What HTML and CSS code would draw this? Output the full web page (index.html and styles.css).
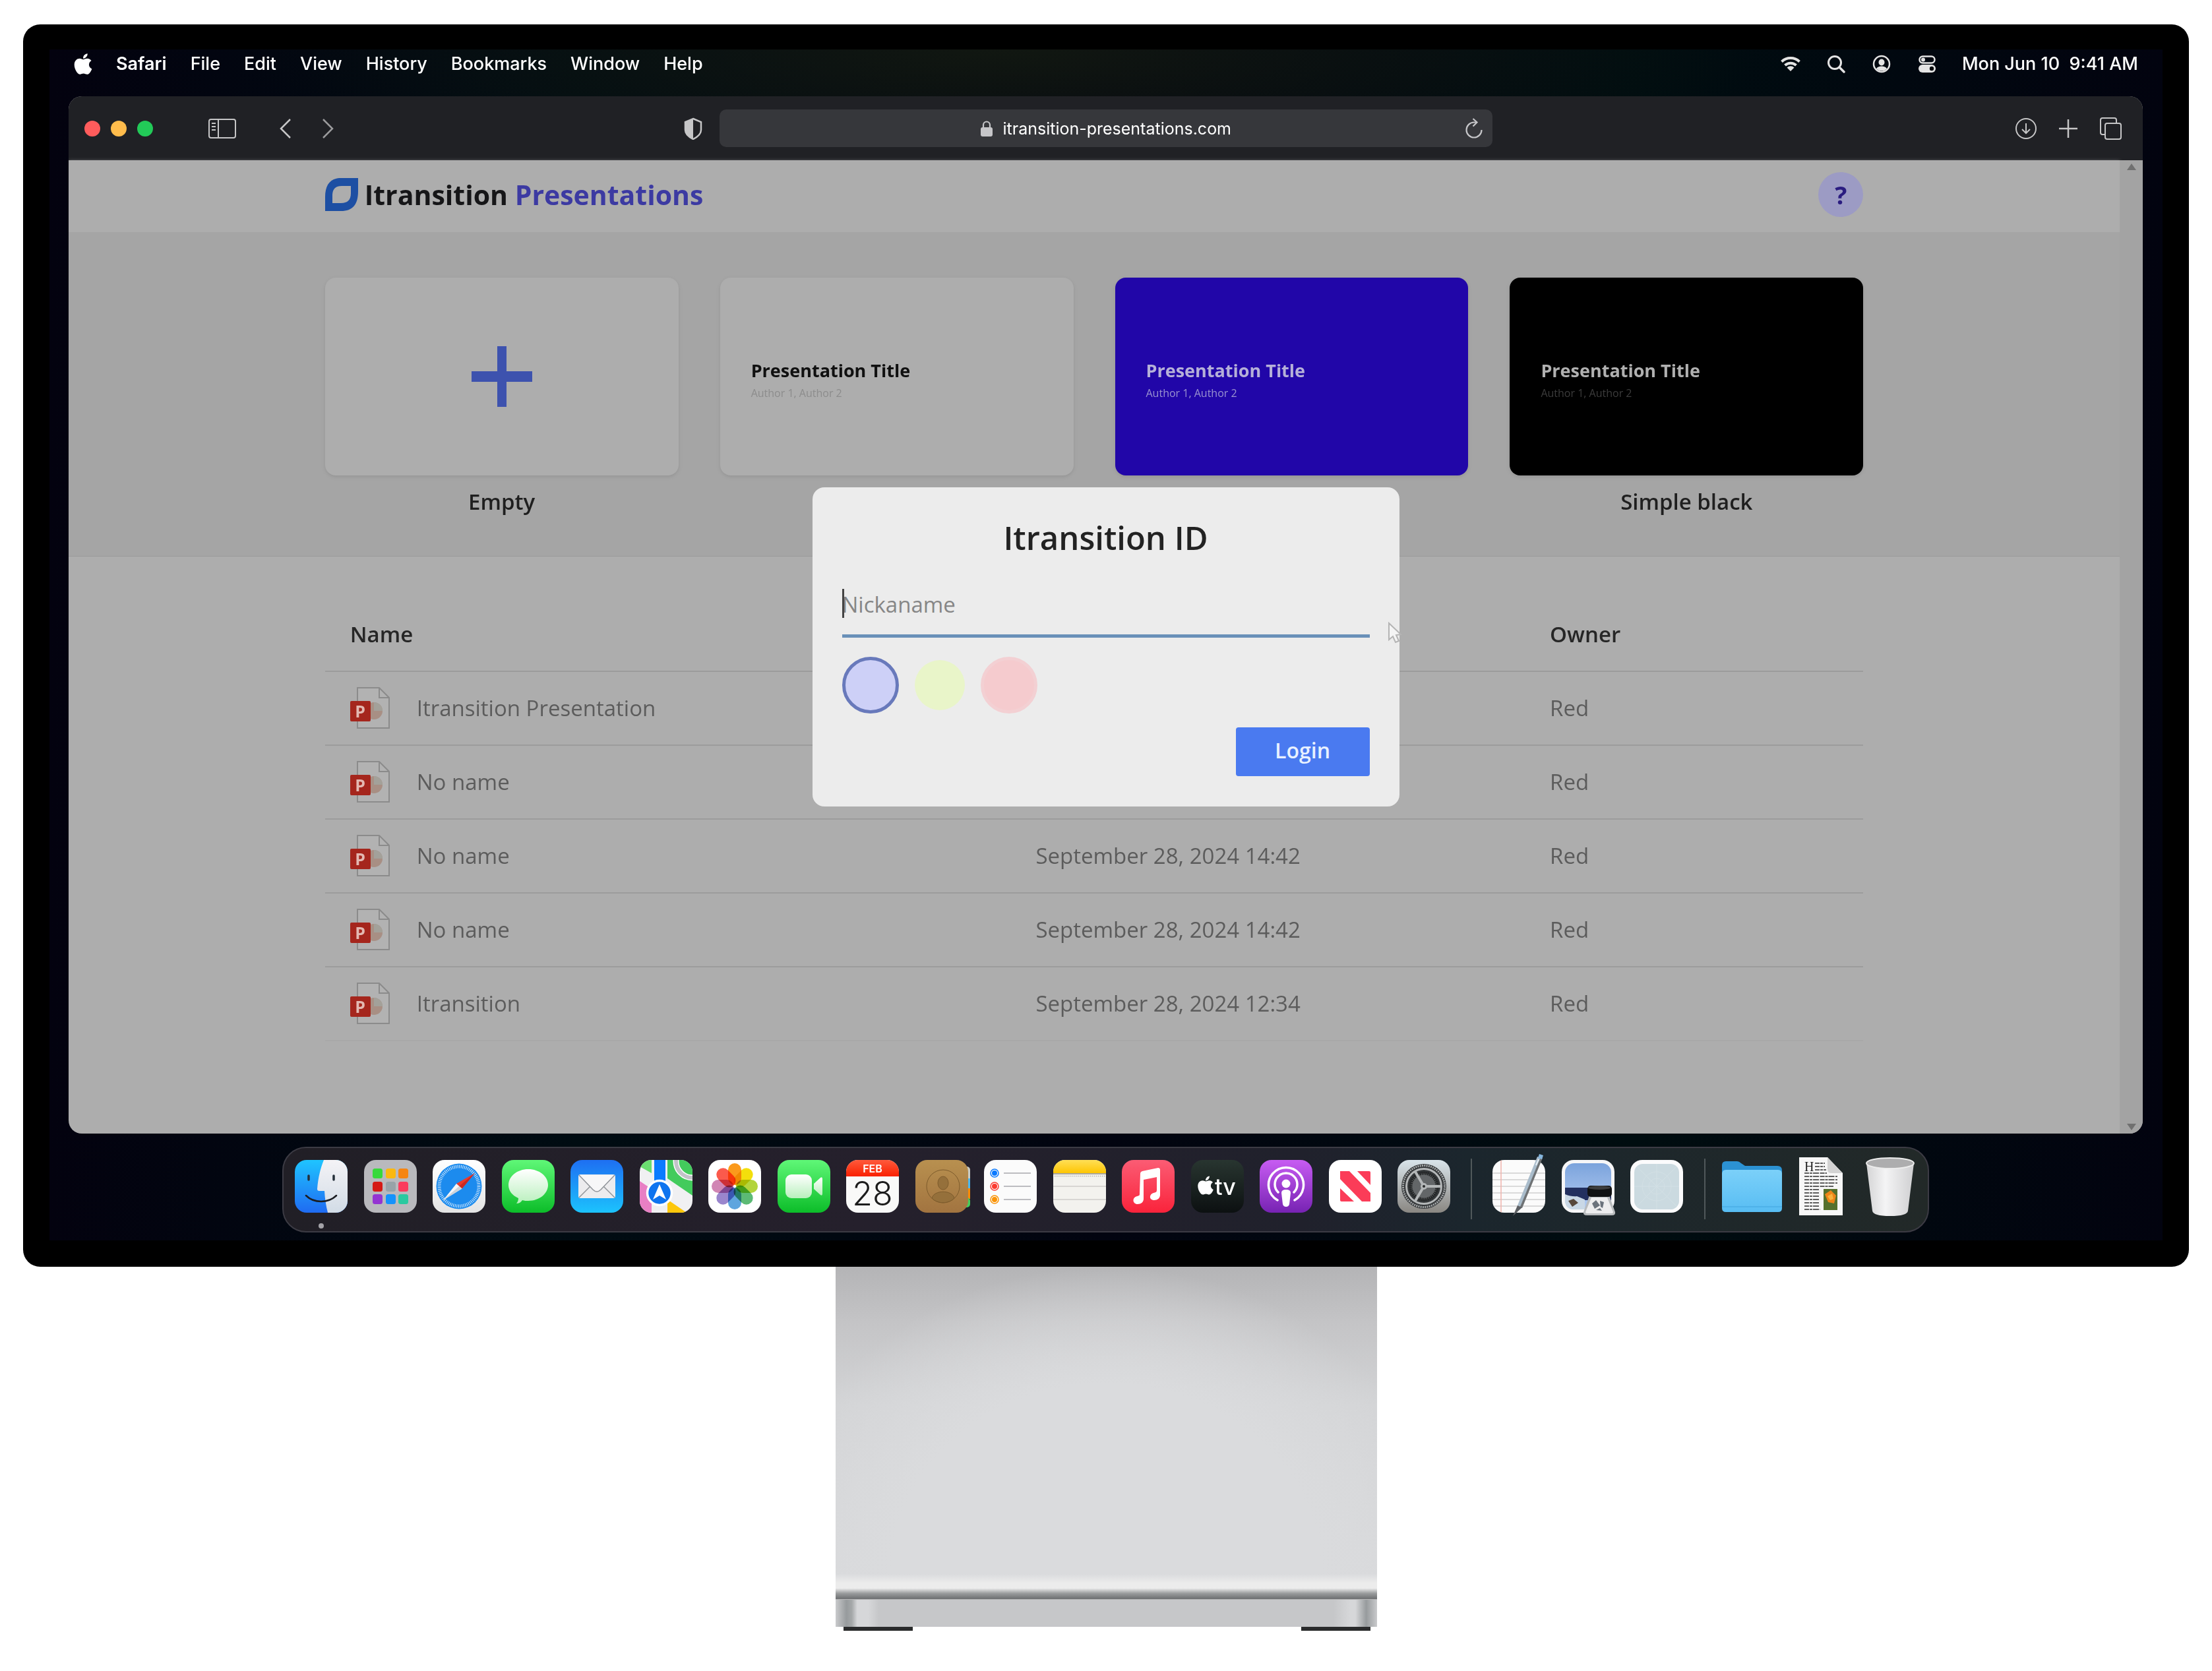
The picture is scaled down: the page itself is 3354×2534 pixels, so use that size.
FILE: index.html
```html
<!DOCTYPE html>
<html lang="en">
<head>
<meta charset="utf-8">
<title>Itransition Presentations</title>
<link rel="stylesheet" href="styles.css">
</head>
<body>
<svg class="defs" aria-hidden="true">
  <defs>
    <linearGradient id="gGreen" x2="0" y2="1"><stop offset="0" stop-color="#5ff777"/><stop offset="1" stop-color="#0cbd29"/></linearGradient>
    <linearGradient id="gWhite" x2="0" y2="1"><stop offset="0" stop-color="#fff"/><stop offset="1" stop-color="#e4e4e4"/></linearGradient>
    <linearGradient id="gBubble" x2="0" y2="1"><stop offset="0" stop-color="#fff"/><stop offset="1" stop-color="#b9f0bd"/></linearGradient>
    <linearGradient id="gBlue" x2="0" y2="1"><stop offset="0" stop-color="#1fc4ff"/><stop offset="1" stop-color="#1f6bf2"/></linearGradient>
    <linearGradient id="gMail" x2="0" y2="1"><stop offset="0" stop-color="#1e6ff2"/><stop offset="1" stop-color="#1cc3fd"/></linearGradient>
    <linearGradient id="gFace" x2="0" y2="1"><stop offset="0" stop-color="#f4f3f6"/><stop offset="1" stop-color="#d2dce6"/></linearGradient>
    <linearGradient id="gRed" x2="0" y2="1"><stop offset="0" stop-color="#ff5a3c"/><stop offset="1" stop-color="#f92000"/></linearGradient>
    <linearGradient id="gTan" x2="0" y2="1"><stop offset="0" stop-color="#b8904f"/><stop offset="1" stop-color="#a27440"/></linearGradient>
    <linearGradient id="gYellow" x2="0" y2="1"><stop offset="0" stop-color="#ffdf57"/><stop offset="1" stop-color="#fec502"/></linearGradient>
    <linearGradient id="gMusic" x2="0" y2="1"><stop offset="0" stop-color="#fb5c74"/><stop offset="1" stop-color="#fa233b"/></linearGradient>
    <linearGradient id="gTv" x2="0" y2="1"><stop offset="0" stop-color="#283530"/><stop offset="1" stop-color="#0c1011"/></linearGradient>
    <linearGradient id="gPod" x2="0" y2="1"><stop offset="0" stop-color="#c75cf2"/><stop offset="1" stop-color="#7723b3"/></linearGradient>
    <linearGradient id="gGear" x2="0" y2="1"><stop offset="0" stop-color="#d9e4ea"/><stop offset="1" stop-color="#8a8782"/></linearGradient>
    <linearGradient id="gFolder" x2="0" y2="1"><stop offset="0" stop-color="#7bd0f9"/><stop offset="1" stop-color="#58bdf3"/></linearGradient>
    <linearGradient id="gTrash"><stop offset="0" stop-color="#d4d4d5"/><stop offset=".4" stop-color="#f4f4f5"/><stop offset="1" stop-color="#cfcfd1"/></linearGradient>
    <linearGradient id="gSky" x2="0" y2="1"><stop offset="0" stop-color="#7ba3dc"/><stop offset="1" stop-color="#b4cdf2"/></linearGradient>
    <clipPath id="tile"><rect width="80" height="80" rx="18"/></clipPath>
    <path id="apple" d="M318.7 268.7c-.2-36.7 16.4-64.4 50-84.8-18.8-26.9-47.2-41.7-84.7-44.6-35.5-2.8-74.3 20.7-88.5 20.7-15 0-49.4-19.7-76.4-19.7C63.3 141.2 4 184.8 4 273.5q0 39.3 14.4 81.2c12.8 36.7 59 126.7 107.2 125.2 25.2-.6 43-17.9 75.8-17.9 31.8 0 48.3 17.9 76.4 17.9 48.6-.7 90.4-82.5 102.6-119.3-65.2-30.7-61.7-90-61.7-91.9zm-56.6-164.2c27.3-32.4 24.8-61.9 24-72.5-24.1 1.4-52 16.4-67.9 34.9-17.5 19.8-27.8 44.3-25.6 71.9 26.1 2 49.9-11.4 69.5-34.3z"/>
    <symbol id="ppt" viewBox="0 0 60 64">
      <path d="M11 1h33l15 15v46H11z" fill="#b2b2b2" stroke="#8b8b8b" stroke-width="2"/>
      <path d="M44 1v15h15" fill="none" stroke="#8b8b8b" stroke-width="2"/>
      <circle cx="36" cy="36" r="13" fill="#a88f84"/>
      <path d="M36 36V23a13 13 0 0 1 13 13z" fill="#a3a19a"/>
      <rect y="21" width="31" height="31" rx="2" fill="#a5261d"/>
      <text x="15" y="46" text-anchor="middle" class="ppt-letter">P</text>
    </symbol>
  </defs>
</svg>

<main class="monitor">
  <div class="screen">
    <header class="menubar">
      <nav class="menus" aria-label="Menu bar">
        <svg class="apple-mark" viewBox="0 30 384 452"><use href="#apple" fill="#fff"/></svg>
        <a class="menu menu-app" href="#">Safari</a>
        <a class="menu" href="#">File</a>
        <a class="menu" href="#">Edit</a>
        <a class="menu" href="#">View</a>
        <a class="menu" href="#">History</a>
        <a class="menu" href="#">Bookmarks</a>
        <a class="menu" href="#">Window</a>
        <a class="menu" href="#">Help</a>
      </nav>
      <div class="status">
        <svg class="status-icon" viewBox="0 0 32 32"><g fill="none" stroke="#e4e4e4" stroke-width="4"><path d="M2.500 12.500a19.500 19.500 0 0 1 27 0"/><path d="M7.500 18a12.500 12.500 0 0 1 17 0"/></g><path d="M10.500 21.500a8 8 0 0 1 11 0L16 27z" fill="#e4e4e4"/></svg>
        <svg class="status-icon" viewBox="0 0 32 32"><g fill="none" stroke="#e4e4e4" stroke-width="3" stroke-linecap="round"><circle cx="14" cy="14" r="9.500"/><path d="M21 21l7 7" stroke-width="3.500"/></g></svg>
        <svg class="status-icon" viewBox="0 0 32 32"><circle cx="16" cy="16" r="12" fill="none" stroke="#e4e4e4" stroke-width="2.500"/><ellipse cx="16" cy="13.500" rx="4.500" ry="5" fill="#e4e4e4"/><path d="M8 23.500c1-3 4.500-4 8-4s7 1 8 4a12 12 0 0 1-16 0z" fill="#e4e4e4"/></svg>
        <svg class="status-icon" viewBox="0 0 32 32"><rect x="4.500" y="4.500" width="23" height="10" rx="5" fill="none" stroke="#e4e4e4" stroke-width="2.500"/><circle cx="10" cy="9.500" r="3" fill="#e4e4e4"/><rect x="3" y="17" width="26" height="12" rx="6" fill="#e4e4e4"/><circle cx="23" cy="23" r="3.200" fill="#03080c"/></svg>
        <time class="clock">Mon Jun 10&nbsp; 9:41 AM</time>
      </div>
    </header>

    <section class="window" aria-label="Browser">
      <div class="toolbar">
        <div class="tools-left">
          <div class="lights">
            <button class="light light-close" aria-label="Close"></button>
            <button class="light light-min" aria-label="Minimize"></button>
            <button class="light light-max" aria-label="Zoom"></button>
          </div>
          <button class="tool tool-sidebar" aria-label="Sidebar"><svg width="42" height="30" viewBox="0 0 42 30"><g fill="none" stroke="#c6c6c7" stroke-width="2"><rect x="1" y="1" width="40" height="28" rx="3"/><path d="M15 1v28M5 7h6M5 12h6M5 17h6"/></g></svg></button>
          <button class="tool" aria-label="Back"><svg width="18" height="30" viewBox="0 0 18 30"><path d="M16 1L2 15l14 14" fill="none" stroke="#c6c6c7" stroke-width="2.500"/></svg></button>
          <button class="tool" aria-label="Forward"><svg width="18" height="30" viewBox="0 0 18 30"><path d="M2 1l14 14L2 29" fill="none" stroke="#9a9a9c" stroke-width="2.500"/></svg></button>
        </div>
        <div class="tools-center">
          <button class="tool" aria-label="Privacy report"><svg width="28" height="34" viewBox="0 0 28 34"><path d="M14 2l12 5v12c0 7-6 11-12 14C8 30 2 26 2 19V7z" fill="none" stroke="#c6c6c7" stroke-width="2.500"/><path d="M14 2v31C8 30 2 26 2 19V7z" fill="#c6c6c7"/></svg></button>
          <div class="address">
            <svg width="18" height="24" viewBox="0 0 18 24"><rect y="10" width="18" height="14" rx="3" fill="#c6c6c9"/><path d="M4 11V6.500a5 5 0 0 1 10 0V11" fill="none" stroke="#c6c6c9" stroke-width="2.200"/></svg>
            <span class="url">itransition-presentations.com</span>
            <button class="tool reload" aria-label="Reload"><svg width="28" height="32" viewBox="0 0 28 32"><g fill="none" stroke="#c6c6c9" stroke-width="2.200"><path d="M25.500 18A11.500 11.500 0 1 1 14 6.500h4"/><path d="M12.500 1l6 5.500-6 6"/></g></svg></button>
          </div>
        </div>
        <div class="tools-right">
          <button class="tool" aria-label="Downloads"><svg width="34" height="34" viewBox="0 0 34 34"><g fill="none" stroke="#c6c6c7" stroke-width="2"><circle cx="17" cy="17" r="15"/><path d="M17 9v15M11 18l6 6 6-6"/></g></svg></button>
          <button class="tool" aria-label="New tab"><svg width="30" height="34" viewBox="0 0 30 34"><path d="M15 3v28M1 17h28" stroke="#c6c6c7" stroke-width="2.500"/></svg></button>
          <button class="tool" aria-label="Tabs"><svg width="34" height="34" viewBox="0 0 34 34"><g fill="none" stroke="#c6c6c7" stroke-width="2"><path d="M8 26H5a3 3 0 0 1-3-3V4a3 3 0 0 1 3-3h18a3 3 0 0 1 3 3v4"/><rect x="9" y="9" width="24" height="24" rx="3"/></g></svg></button>
        </div>
      </div>

      <div class="page">
        <div class="page-body">
          <div class="site-header">
            <div class="container site-header-row">
              <a class="brand" href="#">
                <svg width="50" height="50" viewBox="0 0 50 50"><path d="M24 0H50V20C50 40 42 50 24 50H0V29C0 10 8 0 24 0zM25 12C15 12 11 17 11 27V38H24C34 38 39 33 39 23V12z" fill="#1d4fa3" fill-rule="evenodd"/></svg>
                <span>Itransition <span class="brand-accent">Presentations</span></span>
              </a>
              <button class="help" aria-label="Help">?</button>
            </div>
          </div>

          <section class="templates" aria-label="Templates">
            <div class="container template-grid">
              <a class="template" href="#">
                <div class="slide slide-empty"><svg width="92" height="92" viewBox="0 0 92 92"><path d="M39 0h14v38h39v16H53v38H39V54H0V38h39z" fill="#3d52ae"/></svg></div>
                <span class="template-name">Empty</span>
              </a>
              <a class="template" href="#">
                <div class="slide slide-light"><strong>Presentation Title</strong><small>Author 1, Author 2</small></div>
              </a>
              <a class="template" href="#">
                <div class="slide slide-blue"><strong>Presentation Title</strong><small>Author 1, Author 2</small></div>
              </a>
              <a class="template" href="#">
                <div class="slide slide-black"><strong>Presentation Title</strong><small>Author 1, Author 2</small></div>
                <span class="template-name">Simple black</span>
              </a>
            </div>
          </section>

          <section class="container files" aria-label="Files">
            <table class="file-table">
              <colgroup><col class="col-name"><col class="col-date"><col class="col-owner"></colgroup>
              <thead><tr><th scope="col">Name</th><td></td><th scope="col">Owner</th></tr></thead>
              <tbody>
                <tr><td><a class="file" href="#"><svg class="file-icon"><use href="#ppt"/></svg>Itransition Presentation</a></td><td></td><td>Red</td></tr>
                <tr><td><a class="file" href="#"><svg class="file-icon"><use href="#ppt"/></svg>No name</a></td><td></td><td>Red</td></tr>
                <tr><td><a class="file" href="#"><svg class="file-icon"><use href="#ppt"/></svg>No name</a></td><td>September 28, 2024 14:42</td><td>Red</td></tr>
                <tr><td><a class="file" href="#"><svg class="file-icon"><use href="#ppt"/></svg>No name</a></td><td>September 28, 2024 14:42</td><td>Red</td></tr>
                <tr><td><a class="file" href="#"><svg class="file-icon"><use href="#ppt"/></svg>Itransition</a></td><td>September 28, 2024 12:34</td><td>Red</td></tr>
              </tbody>
            </table>
          </section>
        </div>
        <div class="scrollbar" aria-hidden="true">
          <svg width="14" height="10" viewBox="0 0 14 10"><path d="M0 10l7-10 7 10z" fill="#707070"/></svg>
          <svg width="14" height="10" viewBox="0 0 14 10"><path d="M0 0l7 10 7-10z" fill="#707070"/></svg>
        </div>

        <div class="overlay">
          <form class="login" role="dialog" aria-labelledby="login-title">
            <h1 class="login-title" id="login-title">Itransition ID</h1>
            <label class="nick"><input class="nick-input" type="text" placeholder="Nickaname" aria-label="Nickaname"></label>
            <div class="colors" role="radiogroup" aria-label="Colour">
              <input class="color color-blue" type="radio" name="color" aria-label="Blue" checked>
              <input class="color color-yellow" type="radio" name="color" aria-label="Yellow">
              <input class="color color-red" type="radio" name="color" aria-label="Red">
            </div>
            <button class="login-button" type="button">Login</button>
            <svg class="cursor" width="24" height="34" viewBox="0 0 24 34"><path d="M2 2l18 17-7 1 4 9-5 2-4-9-6 5z" fill="#f4f4f4" stroke="#b4b4b4" stroke-width="2"/></svg>
          </form>
        </div>
      </div>
    </section>

    <nav class="dock" aria-label="Dock">
      <a class="app app-running" href="#" aria-label="Finder"><svg viewBox="0 0 80 80"><g clip-path="url(#tile)"><rect width="80" height="80" fill="url(#gBlue)"/><path d="M44 0C38 15 35 30 34 44q0 3 3 3h8q1 18 5 33h30V0z" fill="url(#gFace)"/></g><path d="M21 24v6M59 24v6" stroke="#25303a" stroke-width="3.500" stroke-linecap="round"/><path d="M17 54c12 12 34 12 46 0" fill="none" stroke="#1b1d22" stroke-width="2.500" stroke-linecap="round"/></svg></a>
      <a class="app" href="#" aria-label="Launchpad"><svg viewBox="0 0 80 80"><rect width="80" height="80" rx="18" fill="#b9b9bd"/><g><rect x="13" y="13" width="15" height="15" rx="3.500" fill="#37d93b"/><rect x="33" y="13" width="15" height="15" rx="3.500" fill="#fbb811"/><rect x="52" y="13" width="15" height="15" rx="3.500" fill="#f68512"/><rect x="13" y="33" width="15" height="15" rx="3.500" fill="#d51a14"/><rect x="33" y="33" width="15" height="15" rx="3.500" fill="#98a3a8"/><rect x="52" y="33" width="15" height="15" rx="3.500" fill="#fb3c5d"/><rect x="13" y="52" width="15" height="15" rx="3.500" fill="#9434d2"/><rect x="33" y="52" width="15" height="15" rx="3.500" fill="#1592fb"/><rect x="52" y="52" width="15" height="15" rx="3.500" fill="#2ac9a0"/></g></svg></a>
      <a class="app" href="#" aria-label="Safari"><svg viewBox="0 0 80 80"><rect width="80" height="80" rx="18" fill="url(#gWhite)"/><circle cx="40" cy="40" r="34.500" fill="#1c8bee"/><circle cx="40" cy="40" r="30" fill="none" stroke="#d9ecfc" stroke-width="5" stroke-dasharray="1 1.618"/><path d="M64 20L44.500 43.500 36 36z" fill="#ea3a2d"/><path d="M64 20L40 40l4.500 3.500z" fill="#c92a22"/><path d="M16 61l20-25 8.500 7.500z" fill="#f5f6f8"/><path d="M16 61l24-21 4.500 3.500z" fill="#cdd3da"/></svg></a>
      <a class="app" href="#" aria-label="Messages"><svg viewBox="0 0 80 80"><rect width="80" height="80" rx="18" fill="url(#gGreen)"/><path d="M40 14c17 0 30 11 30 24S57 62 40 62c-3 0-6 0-9-1-2 3-5 5-9 5 2-2 3-5 3-8-9-4-15-11-15-20 0-13 13-24 30-24z" fill="url(#gBubble)"/></svg></a>
      <a class="app" href="#" aria-label="Mail"><svg viewBox="0 0 80 80"><rect width="80" height="80" rx="18" fill="url(#gMail)"/><rect x="12" y="22" width="56" height="36" rx="3" fill="#ececee"/><path d="M13 57l20-20M67 57L47 37" stroke="#909499" stroke-width="1.500"/><path d="M13 23l21 22q6 6 12 0l21-22" fill="#f7f7f8" stroke="#909499" stroke-width="1.500"/></svg></a>
      <a class="app" href="#" aria-label="Maps"><svg viewBox="0 0 80 80"><g clip-path="url(#tile)"><rect width="80" height="80" fill="#f0f0f2"/><path d="M0 0h18v20L0 10z" fill="#6bdd70"/><path d="M42 0h38v54L42 28z" fill="#43cb5c"/><path d="M0 32l18 12v36H0z" fill="#e87fc4"/><path d="M42 60l38 26H42z" fill="#fdc70b"/><circle cx="80" cy="2" r="25" fill="none" stroke="#fff" stroke-width="9"/><circle cx="80" cy="2" r="25" fill="none" stroke="#c3c3c9" stroke-width="6"/><path d="M22 0h17v40H22z" fill="#0a7bff"/></g><circle cx="30" cy="50" r="18.500" fill="#0f74ef" stroke="#fff" stroke-width="3.500"/><path d="M30 37l10 23-10-6-10 6z" fill="#fff"/></svg></a>
      <a class="app" href="#" aria-label="Photos"><svg viewBox="0 0 80 80"><rect width="80" height="80" rx="18" fill="#fff"/><g class="petals"><rect x="30" y="5" width="20" height="33" rx="10" fill="#fb9a1c"/><rect x="30" y="5" width="20" height="33" rx="10" fill="#f3df0c" transform="rotate(45 40 40)"/><rect x="30" y="5" width="20" height="33" rx="10" fill="#b3d43c" transform="rotate(90 40 40)"/><rect x="30" y="5" width="20" height="33" rx="10" fill="#5cba75" transform="rotate(135 40 40)"/><rect x="30" y="5" width="20" height="33" rx="10" fill="#5fa5de" transform="rotate(180 40 40)"/><rect x="30" y="5" width="20" height="33" rx="10" fill="#9a86cd" transform="rotate(225 40 40)"/><rect x="30" y="5" width="20" height="33" rx="10" fill="#d186b4" transform="rotate(270 40 40)"/><rect x="30" y="5" width="20" height="33" rx="10" fill="#fb5a4c" transform="rotate(315 40 40)"/></g></svg></a>
      <a class="app" href="#" aria-label="FaceTime"><svg viewBox="0 0 80 80"><rect width="80" height="80" rx="18" fill="url(#gGreen)"/><rect x="12" y="22" width="40" height="36" rx="9" fill="url(#gBubble)"/><path d="M55 36l10-9q3-2 3 2v22q0 4-3 2l-10-9z" fill="url(#gBubble)"/></svg></a>
      <a class="app" href="#" aria-label="Calendar"><svg viewBox="0 0 80 80"><g clip-path="url(#tile)"><rect width="80" height="80" fill="#f9f9f8"/><rect width="80" height="25" fill="url(#gRed)"/></g><text x="40" y="19" text-anchor="middle" class="cal-month">FEB</text><text x="40" y="69" text-anchor="middle" class="cal-day">28</text></svg></a>
      <a class="app" href="#" aria-label="Contacts"><svg viewBox="0 0 80 80"><rect x="60" y="10" width="23" height="30" rx="5" fill="#c9cbc4"/><rect x="60" y="28" width="23" height="18" fill="#4db9ee"/><rect x="60" y="43" width="23" height="16" fill="#fb8c05"/><rect x="60" y="57" width="23" height="15" rx="5" fill="#45cf5b"/><rect width="80" height="80" rx="18" fill="url(#gTan)"/><g fill="#95703b" stroke="#7d5b2c" stroke-width="1"><circle cx="42" cy="40" r="25" fill="none"/><ellipse cx="42" cy="35" rx="8" ry="10"/><path d="M25 58c3-13 31-13 34 0-9 9-25 9-34 0z"/></g></svg></a>
      <a class="app" href="#" aria-label="Reminders"><svg viewBox="0 0 80 80"><rect width="80" height="80" rx="18" fill="#fbfbfb"/><g fill="none" stroke-width="1.500"><circle cx="16" cy="20" r="6" stroke="#0a7aff"/><circle cx="16" cy="40" r="6" stroke="#fb3b30"/><circle cx="16" cy="60" r="6" stroke="#fa9305"/></g><circle cx="16" cy="20" r="4" fill="#0a7aff"/><circle cx="16" cy="40" r="4" fill="#fb3b30"/><circle cx="16" cy="60" r="4" fill="#fa9305"/><path d="M30 20h41M30 40h41M30 60h41" stroke="#bdbdc1" stroke-width="2"/></svg></a>
      <a class="app" href="#" aria-label="Notes"><svg viewBox="0 0 80 80"><g clip-path="url(#tile)"><rect width="80" height="80" fill="#f3f2ee"/><rect width="80" height="20" fill="url(#gYellow)"/><path d="M0 21h80" stroke="#a9a69d" stroke-width="2"/><path d="M2 24.500h78" stroke="#b5b3ac" stroke-width="1.500" stroke-dasharray="1.500 1.500"/><path d="M0 40h80M0 60h80" stroke="#cfcdca" stroke-width="1.500"/></g></svg></a>
      <a class="app" href="#" aria-label="Music"><svg viewBox="0 0 80 80"><rect width="80" height="80" rx="18" fill="url(#gMusic)"/><path d="M28 21q0-3 3-4l24-5q3 0 3 3v38c0 5-4 8-9 8-8 0-8-9-1-11 4-1 5-1 5-5V26l-20 4v29c0 5-4 8-9 8-8 0-9-10-1-12 4-1 4-1 4-5z" fill="#fff"/></svg></a>
      <a class="app" href="#" aria-label="TV"><svg viewBox="0 0 80 80"><rect width="80" height="80" rx="18" fill="url(#gTv)"/><svg x="10" y="24" width="24" height="29" viewBox="0 30 384 452"><use href="#apple" fill="#fff"/></svg><text x="36" y="53" class="tv-word">tv</text></svg></a>
      <a class="app" href="#" aria-label="Podcasts"><svg viewBox="0 0 80 80"><rect width="80" height="80" rx="18" fill="url(#gPod)"/><g fill="none" stroke="#fff" stroke-width="3.500" stroke-linecap="round"><path d="M27 61a26.500 26.500 0 1 1 26 0"/><path d="M28 49a17 17 0 1 1 24 0"/></g><circle cx="40" cy="36" r="6.500" fill="#fff"/><path d="M33 50q0-5 7-5t7 5l-2 17q-1 4-5 4t-5-4z" fill="#fff"/></svg></a>
      <a class="app" href="#" aria-label="News"><svg viewBox="0 0 80 80"><rect width="80" height="80" rx="18" fill="#fff"/><g fill="#fb3c58"><path d="M17 17h14l32 33v13H50L17 29z"/><path d="M43 17h18q2 0 2 2v19z"/><path d="M17 43l21 20H19q-2 0-2-2z"/></g></svg></a>
      <a class="app" href="#" aria-label="System Preferences"><svg viewBox="0 0 80 80"><rect width="80" height="80" rx="18" fill="url(#gGear)"/><circle cx="40" cy="40" r="34" fill="#35383a"/><circle cx="40" cy="40" r="31.500" fill="none" stroke="#a5a8a9" stroke-width="3" stroke-dasharray="2 1.300"/><circle cx="40" cy="40" r="26.500" fill="none" stroke="#b4b7b8" stroke-width="3"/><circle cx="40" cy="40" r="20" fill="#636668" stroke="#232526" stroke-width="5" stroke-dasharray="2 1"/><path d="M40 40h26M40 40L27 18M40 40L27 62" stroke="#b4b7b8" stroke-width="4"/><circle cx="40" cy="40" r="5" fill="#b4b7b8"/><circle cx="40" cy="40" r="2" fill="#2b2d2e"/></svg></a>
      <span class="dock-line"></span>
      <a class="app" href="#" aria-label="TextEdit"><svg viewBox="0 0 80 80"><g clip-path="url(#tile)"><rect width="80" height="80" fill="#fbfbfb"/><path d="M0 20h80M0 30h80M0 40h80M0 50h80M0 60h80M0 70h80" stroke="#b9b9b9" stroke-width="1"/><path d="M13 0v80" stroke="#f0b3ad" stroke-width="1.500"/></g><path d="M68-5l7 2-30 75-7-3z" fill="#a9bccb"/><path d="M73-4l3 1-31 76-3-2z" fill="#6f7274"/><path d="M71-9l6 2-2 6-6-2z" fill="#86b6dd"/><path d="M38 69l7 3-14 13z" fill="#5c5f63"/><path d="M66 8l4-9" stroke="#e6edf2" stroke-width="2"/></svg></a>
      <a class="app" href="#" aria-label="Preview"><svg viewBox="0 0 80 80"><rect width="80" height="80" rx="18" fill="#f6f6f7"/><rect x="5" y="5" width="70" height="70" rx="14" fill="url(#gSky)"/><path d="M5 42h70v19H5z" fill="#23305f"/><path d="M5 52q10 4 18 3l12 5v15H19Q5 75 5 61z" fill="#c9d8e6"/><path d="M10 62l8-3 7 6-9 6z" fill="#57483c"/><path d="M42 54h30l9 25q1 5-5 5H38q-6 0-5-5z" fill="#b9bcbe"/><path d="M45 57h24l9 22q0 2-3 2H39q-3 0-3-2z" fill="#ededee"/><path d="M46 66l6-5 6 8-8 5zM58 62l6 2-2 9-3-2zM52 76l6-3 3 4z" fill="#6b737c"/><rect x="39" y="39" width="37" height="17" rx="5" fill="#101112"/><ellipse cx="57" cy="42" rx="17" ry="3" fill="#3c3d3e"/></svg></a>
      <a class="app" href="#" aria-label="Simulator"><svg viewBox="0 0 80 80"><rect width="80" height="80" rx="18" fill="#fbfbfc"/><rect x="6" y="6" width="68" height="69" rx="13" fill="#cbdae0"/><g fill="none" stroke="#d3e0e5" stroke-width="1"><path d="M6 40h68M40 6v69M10 10l60 60M70 10L10 70"/><circle cx="40" cy="40" r="22"/><circle cx="40" cy="40" r="12"/></g></svg></a>
      <span class="dock-line"></span>
      <a class="app" href="#" aria-label="Downloads"><svg viewBox="0 0 80 80"><path d="M-6 8q0-6 6-6h17q3 0 6 3l6 4h49q7 0 7 7v20H-6z" fill="#2c92d3"/><path d="M-6 21q0-6 6-6h79q6 0 6 6v52q0 6-6 6H0q-6 0-6-6z" fill="url(#gFolder)"/><path d="M-6 71h91" stroke="#4aaee6" stroke-width="1.500"/></svg></a>
      <a class="app" href="#" aria-label="Document"><svg viewBox="0 0 80 80"><path d="M7-4h43l23 24v64H7z" fill="#f7f7f7"/><path d="M50-4v18q0 6 6 6h17z" fill="#d3d3d3"/><text x="15" y="17" class="doc-cap">H</text><path d="M31 5h15M31 10h15M31 15h17M15 20h34M15 25h50M15 30h50M15 35h50M15 40h44M15 45h22M15 50h22M15 55h22M15 60h23M15 65h23M15 70h22M15 75h24" stroke="#5e5e5e" stroke-width="2" stroke-dasharray="7 1 4 1 9 1.500"/><rect x="44" y="44" width="21" height="32" fill="#55702d"/><path d="M46 52l9-6 8 8-3 12-9-2z" fill="#ee8418"/><path d="M50 55l7-4 2 8-5 2z" fill="#f9b23c"/></svg></a>
      <a class="app" href="#" aria-label="Trash"><svg viewBox="0 0 80 80"><path d="M4 5l9 72q1 8 27 8t27-8l9-72z" fill="url(#gTrash)"/><ellipse cx="40" cy="5" rx="36" ry="8" fill="#adadae" stroke="#ececec" stroke-width="2"/></svg></a>
    </nav>
  </div>
</main>
<div class="stand">
  <div class="stand-neck"></div>
  <div class="stand-edge"></div>
  <div class="stand-base"></div>
  <div class="stand-feet"><span class="foot"></span><span class="foot"></span></div>
</div>
</body>
</html>
```
FILE: styles.css
```css
* { box-sizing: border-box; }

body {
  margin: 0;
  padding: 37px 35px 0;
  background: #fff;
  font-family: "Open Sans", "Noto Sans", sans-serif;
}

a { color: inherit; text-decoration: none; }

button {
  padding: 0;
  border: 0;
  background: none;
  font: inherit;
}

svg { display: block; }

.defs { position: absolute; width: 0; height: 0; }

/* Monitor */
.monitor {
  padding: 38px 40px 40px;
  border-radius: 26px;
  background: #000;
}

.screen {
  padding: 0 30px 12px 29px;
  background:
    radial-gradient(ellipse 36% 12% at 45% 0, #111711, transparent),
    linear-gradient(90deg, #03020f, #000c12 25%, #020410 50%, #000d10 75%, #02030f);
}

/* Menu bar */
.menubar {
  display: flex;
  justify-content: space-between;
  height: 71px;
  padding: 0 7px 27px 8px;
  color: #fff;
  font: 500 27px/44px Inter, sans-serif;
}

.menus,
.status { display: flex; align-items: center; }

.menus { gap: 36px; }

.apple-mark { width: 28px; height: 32px; }

.menu-app { font-weight: 600; }

.status { gap: 37px; }

.status-icon { width: 32px; height: 32px; }

/* Browser window */
.window {
  overflow: hidden;
  border-radius: 20px;
  background: #adadad;
}

.toolbar {
  display: grid;
  grid-template-columns: 20fr 1226px 21fr;
  align-items: center;
  height: 97px;
  padding: 0 32px 0 24px;
  background: #202125;
}

.tools-left,
.tools-center,
.tools-right,
.lights { display: flex; align-items: center; }

.lights { gap: 16px; margin-right: 38px; }

.light { width: 24px; height: 24px; border-radius: 50%; }
.light-close { background: #ff5c5c; }
.light-min { background: #ffbc4c; }
.light-max { background: #22ca58; }

.tools-left { gap: 46px; }
.tool-sidebar { margin: 0 20px 0 0; }

.tools-center { gap: 26px; }

.address {
  position: relative;
  display: flex;
  flex: 1;
  align-items: center;
  justify-content: center;
  gap: 16px;
  height: 57px;
  border-radius: 10px;
  background: #36373b;
}

.url { color: #fff; font: 400 25px/32px Inter, sans-serif; }

.reload { position: absolute; right: 14px; }

.tools-right { justify-content: flex-end; gap: 32px; }

/* Page */
.page {
  position: relative;
  display: grid;
  grid-template-columns: 1fr 35px;
}

.container { width: 75%; margin: 0 auto; }

.site-header { height: 109px; box-shadow: 0 2px 6px #9c9c9c; }

.site-header-row {
  display: flex;
  align-items: center;
  justify-content: space-between;
  height: 104px;
}

.brand {
  display: flex;
  align-items: center;
  gap: 10px;
  color: #161618;
  font-size: 41px;
  font-weight: 700;
}

.brand-accent { color: #3c3aa2; }

.help {
  width: 68px;
  height: 68px;
  border-radius: 50%;
  background: #9c9bc4;
  color: #2a1c80;
  font-size: 38px;
  font-weight: 700;
}

.templates { padding: 69px 0 60px; background: #a5a5a5; border-bottom: 1px solid #9a9a9a; }

.template-grid {
  display: grid;
  grid-template-columns: repeat(4, 1fr);
  gap: 63px;
}

.slide {
  display: flex;
  flex-direction: column;
  justify-content: center;
  aspect-ratio: 536 / 300;
  padding: 14px 47px 0;
  border-radius: 16px;
  background: #adadad;
  box-shadow: 0 2px 5px #959595;
}

.slide-empty { align-items: center; padding-top: 0; }

.slide strong { color: #101010; font-size: 27px; line-height: 36px; }
.slide small { color: #8c8c8c; font-size: 16px; line-height: 32px; }

.slide-blue { background: #2106a8; }
.slide-blue strong { color: #b5b0d8; }
.slide-blue small { color: #9a93d0; }

.slide-black { background: #000; }
.slide-black strong { color: #b0b0b0; }
.slide-black small { color: #3c3c3c; }

.template-name {
  display: block;
  margin-top: 18px;
  color: #1f1f1f;
  font-size: 33px;
  font-weight: 600;
  line-height: 44px;
  text-align: center;
}

/* File list */
.files { padding: 62px 0 140px; }

.file-table {
  width: 100%;
  border-collapse: collapse;
  table-layout: fixed;
  color: #5c5c5c;
  font-size: 33px;
  font-weight: 500;
  text-align: left;
}

.col-name { width: 45%; }
.col-date { width: 33%; }
.col-owner { width: 22%; }

.file-table th,
.file-table td {
  height: 112px;
  padding: 0 38px;
  border-bottom: 2px solid #9c9c9c;
}

.file-table td:nth-child(2) { padding-left: 28px; }

.file-table th { color: #262626; font-weight: 600; }

.file-table tbody tr:last-child td { border-color: #a8a8a8; }

.file { display: flex; align-items: center; gap: 41px; }

.file-icon { width: 60px; height: 64px; }

.ppt-letter { fill: #e3b9b2; font: 700 25px "Open Sans", sans-serif; }

.scrollbar {
  display: flex;
  flex-direction: column;
  align-items: center;
  justify-content: space-between;
  padding: 5px 0;
  background: #a3a3a3;
}

/* Login dialog */
.overlay {
  position: absolute;
  inset: 0;
  display: grid;
  place-items: center;
}

.login {
  position: relative;
  display: flex;
  flex-direction: column;
  width: 890px;
  padding: 46px 45px;
  border-radius: 18px;
  background: #ececec;
}

.login-title {
  margin: 0;
  color: #222;
  font-size: 49px;
  font-weight: 600;
  line-height: 60px;
  text-align: center;
}

.nick { position: relative; margin-top: 34px; }

.nick::before {
  content: "";
  position: absolute;
  top: 14px;
  width: 3px;
  height: 44px;
  background: #444;
}

.nick-input {
  display: block;
  width: 100%;
  height: 88px;
  padding: 0 0 8px;
  border: 0;
  border-bottom: 5px solid #6990b8;
  outline: 0;
  background: none;
  font: 400 33px "Open Sans", sans-serif;
}

.nick-input::placeholder { color: #868686; opacity: 1; }

.colors { display: flex; gap: 19px; margin-top: 29px; }

.color {
  appearance: none;
  width: 86px;
  height: 86px;
  margin: 0;
  border: 5px solid transparent;
  border-radius: 50%;
}

.color:checked { border-color: #6879bb; }
.color-blue { background: #cdd0f7; }
.color-yellow { background: #e9f5c9 padding-box; }
.color-red { background: #f5cbce; border-color: #f3d0d3; }

.login-button {
  align-self: flex-end;
  width: 203px;
  height: 74px;
  margin-top: 21px;
  padding-bottom: 4px;
  border-radius: 4px;
  background: #4a7af0;
  color: #e8f1ff;
  font-size: 32px;
  font-weight: 600;
}

.cursor { position: absolute; top: 204px; right: -6px; }

/* Dock */
.dock {
  display: flex;
  width: 2497px;
  max-width: 100%;
  height: 130px;
  margin: 20px auto 0;
  padding: 18px 5px 0;
  border: 2px solid #3c3b44;
  border-radius: 36px;
  background: linear-gradient(90deg, #211f26, #25202c 35%, #20212c 62%, #1b262d 72%, #222928);
}

.app { display: flex; flex: 1; flex-direction: column; align-items: center; }

.app > svg { width: 80px; height: 80px; overflow: visible; }

.app-running::after {
  content: "";
  width: 8px;
  height: 8px;
  margin-top: 16px;
  border-radius: 50%;
  background: #a4a3a8;
}

.dock-line { width: 2px; height: 92px; margin: -2px 19px 0; background: #50585a; }

.petals rect { mix-blend-mode: multiply; }

.cal-month { fill: #fff; font: 600 16px Inter, sans-serif; }
.cal-day { fill: #1c1c1c; font: 300 50px Inter, sans-serif; }
.tv-word { fill: #fff; font: 500 34px Inter, sans-serif; }
.doc-cap { fill: #222; font: 400 20px "Liberation Serif", serif; }

/* Stand */
.stand { width: 25%; margin: 0 auto; }

.stand-neck {
  height: 466px;
  background:
    radial-gradient(ellipse 64% 100% at 50% 100%, #dadbdd 62%, #dadbdd00),
    linear-gradient(#b4b4b6, #c4c4c6 18%, #d3d4d6 45%, #d8d9db);
}

.stand-edge {
  height: 39px;
  background: linear-gradient(#dadbdd, #ececec 35%, #ececec 55%, #9a9c9d 75%, #6e7072 96%, #dcdcdc);
}

.stand-base {
  height: 41px;
  background: linear-gradient(90deg, #c9cacc, #979b9d 2%, #a5a8a9 3%, #d6d7d9 4%, #d6d7d9 6%, #c6c7c9 8%, #c6c7c9 92%, #d6d7d9 95%, #d6d7d9 96%, #979b9d 98%, #c9cacc);
}

.stand-feet { display: flex; justify-content: space-between; padding: 0 10px 0 12px; }

.foot { width: 105px; height: 6px; background: #2a2b2c; }
```
